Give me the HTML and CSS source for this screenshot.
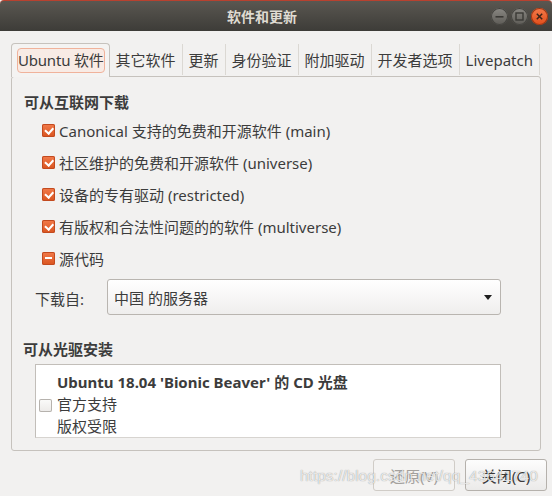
FILE: index.html
```html
<!DOCTYPE html>
<html lang="zh-CN">
<head>
<meta charset="utf-8">
<title>软件和更新</title>
<link rel="stylesheet" href="styles.css">
</head>
<body>
<div class="window">
  <header class="titlebar">
    <div class="title">软件和更新</div>
    <div class="wbtns">
      <span class="wbtn"><svg width="17" height="17" viewBox="0 0 17 17"><rect x="4.5" y="8" width="8" height="1.6" fill="#3a3935"/></svg></span>
      <span class="wbtn"><svg width="17" height="17" viewBox="0 0 17 17"><rect x="5" y="5" width="7" height="7" fill="none" stroke="#3a3935" stroke-width="1.4"/></svg></span>
      <span class="wbtn close"><svg width="17" height="17" viewBox="0 0 17 17"><path d="M5.8 5.8 L11.2 11.2 M11.2 5.8 L5.8 11.2" stroke="#3d2418" stroke-width="1.5"/></svg></span>
    </div>
  </header>
  <main class="body">
    <nav class="tabs">
      <div class="tab active"><span class="focus">Ubuntu 软件</span></div>
      <div class="tab">其它软件</div>
      <div class="tab">更新</div>
      <div class="tab">身份验证</div>
      <div class="tab">附加驱动</div>
      <div class="tab">开发者选项</div>
      <div class="tab">Livepatch</div>
    </nav>
    <section class="frame">
      <div class="heading h1">可从互联网下载</div>
      <div class="checks">
        <label class="row"><span class="cb on"></span>Canonical 支持的免费和开源软件 (main)</label>
        <label class="row"><span class="cb on"></span>社区维护的免费和开源软件 (universe)</label>
        <label class="row"><span class="cb on"></span>设备的专有驱动 (restricted)</label>
        <label class="row"><span class="cb on"></span>有版权和合法性问题的的软件 (multiverse)</label>
        <label class="row"><span class="cb mixed"></span>源代码</label>
      </div>
      <div class="download">
        <span class="dl-label">下载自:</span>
        <div class="combo"><span>中国 的服务器</span><span class="arrow"></span></div>
      </div>
      <div class="heading h2">可从光驱安装</div>
      <div class="cdbox">
        <span class="cb off"></span>
        <div class="cdtext">
          <div class="cdtitle">Ubuntu 18.04 'Bionic Beaver' 的 CD 光盘</div>
          <div>官方支持</div>
          <div>版权受限</div>
        </div>
      </div>
    </section>
    <footer class="actions">
      <button class="btn" disabled>还原(V)</button>
      <button class="btn">关闭(C)</button>
    </footer>
  </main>
  <div class="watermark">https://blog.csdn.net/qq_43641740</div>
</div>
</body>
</html>
```
FILE: styles.css
```css
* { box-sizing: border-box; }
html, body { margin: 0; padding: 0; }
body {
  width: 552px;
  height: 496px;
  overflow: hidden;
  background: #a8362c;
  font-family: "Noto Sans", "Noto Sans CJK SC", sans-serif;
  color: #3c3c3c;
  font-size: 15px;
}
.window {
  position: relative;
  width: 552px;
  height: 496px;
  background: #f2f1f0;
  display: flex;
  flex-direction: column;
}
.titlebar {
  height: 31px;
  flex: none;
  border-top: 1px solid #b8412f;
  border-radius: 4px 4px 0 0;
  background: linear-gradient(#5a5751, #3d3c38);
  display: flex;
  align-items: center;
  position: relative;
}
.title {
  flex: 1;
  text-align: center;
  padding-right: 28px;
  padding-top: 1px;
  color: #dfdbd2;
  font-weight: bold;
  font-size: 14px;
  line-height: 30px;
}
.wbtns {
  position: absolute;
  right: 4px;
  top: 7px;
  display: flex;
  gap: 3px;
}
.wbtn {
  width: 17px;
  height: 17px;
  border-radius: 50%;
  background: linear-gradient(#8a8883, #5d5b56);
  box-shadow: inset 0 0 0 1px #44433f;
  display: block;
}
.wbtn svg { display: block; }
.wbtn.close {
  background: linear-gradient(#f57a4a, #e04e1b);
  box-shadow: inset 0 0 0 1px #9c3614;
}
.body {
  flex: 1;
  display: flex;
  flex-direction: column;
  padding: 12px 11px 0 11px;
}
.tabs {
  display: flex;
  height: 33px;
  flex: none;
  position: relative;
  z-index: 1;
}
.tab {
  display: flex;
  align-items: center;
  padding: 0 6px;
  margin: 1px 0 1px 0;
  border-right: 1px solid #dbd8d3;
  line-height: 20px;
  white-space: nowrap;
}
.tab.active {
  margin: 0 0 -1px 0;
  padding: 0 4px 0 5px;
  border: 1px solid #c6c2bd;
  border-bottom: none;
  border-radius: 4px 4px 0 0;
  background: #f4f3f2;
}
.focus {
  display: block;
  padding: 2px 0;
  border: 1px solid #f0b29b;
  border-radius: 4px;
  background: #f8ebe5;
  line-height: 19px;
  letter-spacing: -0.2px;
}
.frame {
  height: 375px;
  flex: none;
  border: 1px solid #c6c2bd;
  border-radius: 3px;
  background: #f2f1f0;
  padding: 15px 39px 0 12px;
  display: flex;
  flex-direction: column;
}
.heading {
  font-weight: bold;
  line-height: 20px;
}
.checks {
  margin-top: 2px;
  display: flex;
  flex-direction: column;
}
.row {
  height: 32px;
  display: flex;
  align-items: center;
  gap: 4px;
  padding-left: 18px;
  white-space: nowrap;
}
.cb {
  width: 13px;
  height: 13px;
  border-radius: 2px;
  flex: none;
  position: relative;
  display: block;
}
.cb.on, .cb.mixed {
  background: linear-gradient(#f27b4b, #d9541f);
  box-shadow: inset 0 0 0 1px #c24a1f;
}
.cb.on::after {
  content: "";
  position: absolute;
  left: 3px;
  top: 3px;
  width: 6px;
  height: 3.5px;
  border-left: 2px solid #fff;
  border-bottom: 2px solid #fff;
  transform: rotate(-48deg);
  transform-origin: center;
}
.cb.mixed::after {
  content: "";
  position: absolute;
  left: 3px;
  top: 5.5px;
  width: 7px;
  height: 2px;
  background: #fff;
}
.cb.off {
  background: linear-gradient(#fbfbfa, #eceae8);
  box-shadow: inset 0 0 0 1px #b6b2ad;
  margin-top: 2px;
}
.download {
  margin-top: 5px;
  display: flex;
  align-items: center;
  height: 36px;
}
.dl-label {
  width: 83px;
  padding-left: 11px;
  flex: none;
  padding-top: 3px;
}
.combo {
  flex: 1;
  height: 36px;
  border: 1px solid #b9b5b0;
  border-radius: 3px;
  background: linear-gradient(#ffffff, #efeeed);
  display: flex;
  align-items: center;
  justify-content: space-between;
  padding: 0 8px 0 6px;
}
.arrow {
  width: 0;
  height: 0;
  border-left: 4.5px solid transparent;
  border-right: 4.5px solid transparent;
  border-top: 5px solid #1e1e1e;
}
.h2 {
  margin-top: 24px;
  margin-left: -1px;
}
.cdbox {
  margin-top: 5px;
  margin-left: 11px;
  height: 74px;
  border: 1px solid #c2beb9;
  border-bottom-color: #d7d4d0;
  background: #ffffff;
  display: flex;
  align-items: center;
  padding: 6px 0 0 3px;
  gap: 5px;
  overflow: hidden;
}
.cdtext {
  line-height: 22px;
  white-space: nowrap;
  align-self: flex-start;
}
.cdtitle { font-weight: bold; }
.actions {
  display: flex;
  justify-content: flex-end;
  gap: 10px;
  padding: 8px 0 0 0;
  margin-right: -6px;
}
.btn {
  width: 82px;
  height: 32px;
  border-radius: 3px;
  border: 1px solid #b5b1ac;
  background: linear-gradient(#fdfdfd, #ebeae9);
  font-family: "Noto Sans", "Noto Sans CJK SC", sans-serif;
  font-size: 15px;
  color: #3c3c3c;
  padding: 0;
}
.btn:disabled {
  border-color: #d0ccc7;
  background: #f4f3f2;
  color: #a4a19d;
}
.watermark {
  position: absolute;
  left: 300px;
  top: 467px;
  font-family: "Liberation Sans", sans-serif;
  font-size: 15.5px;
  color: rgba(255, 255, 255, 0.78);
  text-shadow: 0 0 1px rgba(0, 0, 0, 0.45);
  white-space: nowrap;
  pointer-events: none;
}
```
